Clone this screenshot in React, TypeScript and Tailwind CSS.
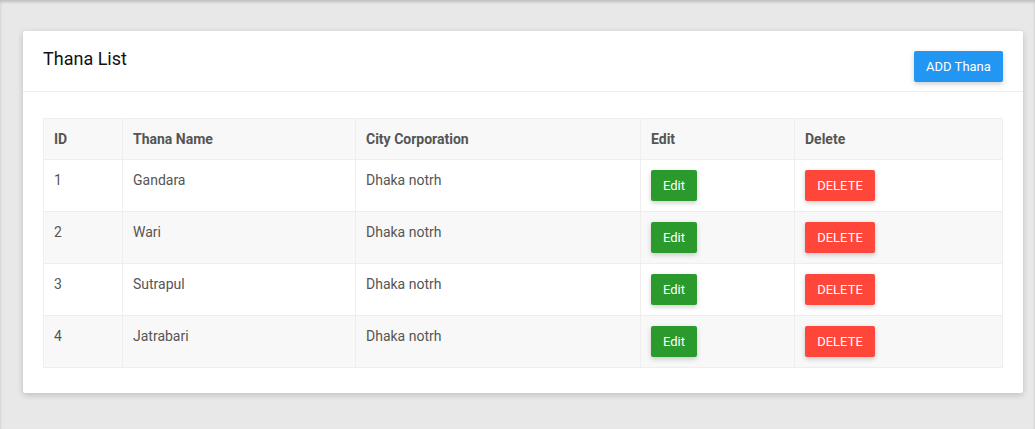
import React from 'react';

interface Thana {
  id: number;
  name: string;
  city: string;
}

const thanas: Thana[] = [
  { id: 1, name: 'Gandara', city: 'Dhaka notrh' },
  { id: 2, name: 'Wari', city: 'Dhaka notrh' },
  { id: 3, name: 'Sutrapul', city: 'Dhaka notrh' },
  { id: 4, name: 'Jatrabari', city: 'Dhaka notrh' },
];

const th = 'border border-[#eeeeee] px-[10px] py-[10px] text-left font-bold leading-5 text-[#555555]';
const td = 'border border-[#eeeeee] px-[10px] py-[10px] align-top leading-5 text-[#555555]';

const App: React.FC = () => {
  return (
    <div
      className="min-h-[429px] bg-[#e8e8e8] pt-[31px] pb-9 shadow-[inset_0_2px_3px_rgba(0,0,0,0.18)]"
      style={{ fontFamily: 'Roboto, "Liberation Sans", sans-serif' }}
    >
      <div className="mx-[23px] w-[1000px] rounded-[2px] bg-white shadow-[0_2px_6px_rgba(0,0,0,0.18)]">
        {/* header */}
        <div className="flex h-[61px] items-start justify-between border-b border-[#eeeeee] px-5">
          <h2 className="mt-[14px] text-[18px] leading-[27px] font-normal text-[#111111]">Thana List</h2>
          <button className="mt-5 h-[31px] w-[89px] rounded-[2px] bg-[#2196f3] text-[13px] text-white shadow-[0_2px_5px_rgba(0,0,0,0.2)]">
            ADD Thana
          </button>
        </div>

        {/* body */}
        <div className="px-5 pt-[26px] pb-[25px]">
          <table className="w-[960px] table-fixed border-collapse border border-[#dddddd] text-[14px]">
            <colgroup>
              <col className="w-[79px]" />
              <col className="w-[233px]" />
              <col className="w-[285px]" />
              <col className="w-[154px]" />
              <col />
            </colgroup>
            <thead>
              <tr className="bg-[#f8f8f8]">
                <th className={th}>ID</th>
                <th className={th}>Thana Name</th>
                <th className={th}>City Corporation</th>
                <th className={th}>Edit</th>
                <th className={th}>Delete</th>
              </tr>
            </thead>
            <tbody>
              {thanas.map((t, i) => (
                <tr key={t.id} className={i % 2 === 1 ? 'bg-[#f8f8f8]' : 'bg-white'}>
                  <td className={td}>{t.id}</td>
                  <td className={td}>{t.name}</td>
                  <td className={td}>{t.city}</td>
                  <td className={td}>
                    <button className="block h-[31px] w-[46px] rounded-[2px] bg-[#2b9a2d] text-[13px] text-white shadow-[0_2px_5px_rgba(0,0,0,0.2)]">
                      Edit
                    </button>
                  </td>
                  <td className={td}>
                    <button className="block h-[31px] w-[70px] rounded-[2px] bg-[#ff463a] text-[13px] text-white shadow-[0_2px_5px_rgba(0,0,0,0.2)]">
                      DELETE
                    </button>
                  </td>
                </tr>
              ))}
            </tbody>
          </table>
        </div>
      </div>
    </div>
  );
};

export default App;
